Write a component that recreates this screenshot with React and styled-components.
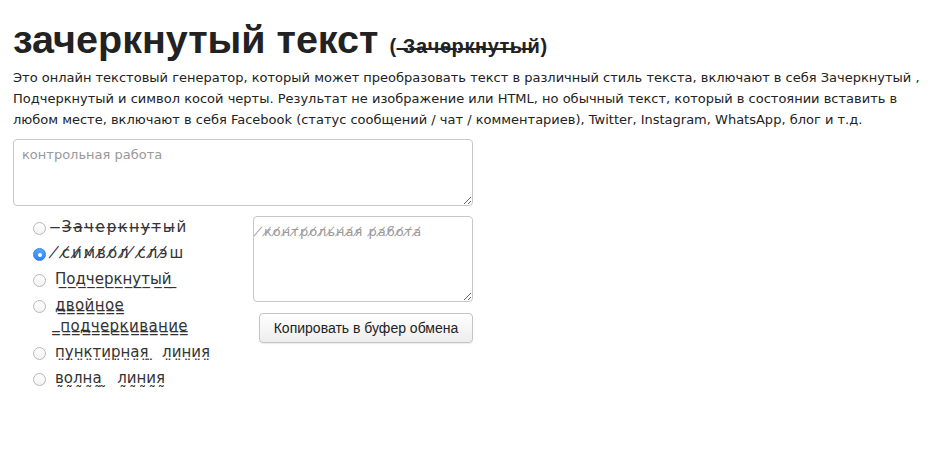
import React, { useState } from "react";
import styled, { createGlobalStyle } from "styled-components";

const Global = createGlobalStyle`
  html, body { margin: 0; padding: 0; background: #fff; }
  body { font-family: "DejaVu Sans", "Noto Sans", sans-serif; color: #222; }
`;

const NB = "\u00A0";
const markAfter = (s, m) => Array.from(s).map((c) => c + m).join("");
const markBefore = (s, m) => Array.from(s).map((c) => m + c).join("");

const Page = styled.div`
  padding: 12px 13px 0 13px;
`;

const Title = styled.h1`
  margin: 0;
  padding-top: 4px;
  height: 42px;
  font-family: "Liberation Sans", Arial, sans-serif;
  font-weight: bold;
  font-size: 39.5px;
  line-height: 46px;
  color: #222;
  white-space: nowrap;
`;

const Sub = styled.span`
  font-size: 20px;
  line-height: 20px;
  letter-spacing: 0.6px;
`;

const Intro = styled.p`
  margin: 9px 0 0 0;
  height: 63px;
  font-size: 13px;
  line-height: 21px;
  max-width: 910px;
  color: #222;
`;

const Widget = styled.div`
  width: 460px;
  margin-top: 9px;
`;

const Input = styled.textarea`
  display: block;
  box-sizing: border-box;
  width: 460px;
  height: 67px;
  border: 1px solid #c8c8c8;
  border-radius: 4px;
  padding: 7px 8px;
  font-family: "DejaVu Sans", sans-serif;
  font-size: 13px;
  color: #333;
  resize: vertical;
  outline: none;
  &::placeholder { color: #999; }
`;

const Columns = styled.div`
  display: flex;
  margin-top: 10px;
`;

const Options = styled.ul`
  list-style: none;
  margin: 0;
  padding: 1px 0 0 20px;
  width: 220px;
  box-sizing: border-box;
`;

const Option = styled.li`
  display: flex;
  align-items: flex-start;
  font-size: 15px;
  line-height: 21px;
  margin-bottom: 5px;
  color: #333;
`;

const Radio = styled.input`
  appearance: none;
  flex: none;
  width: 13px;
  height: 13px;
  margin: 5px 9px 0 0;
  border-radius: 50%;
  border: 1px solid #b8b8b8;
  background: linear-gradient(#fff, #f2f2f2);
  box-sizing: border-box;
  position: relative;
  &:checked {
    border-color: #2f7fe6;
    background: linear-gradient(#5aa7fa, #2a83f0);
  }
  &:checked::after {
    content: "";
    position: absolute;
    left: 3.5px;
    top: 3.5px;
    width: 4px;
    height: 4px;
    border-radius: 50%;
    background: #fff;
  }
`;

const Label = styled.label`
  white-space: normal;
  letter-spacing: ${(p) => p.$spacing || 0}px;
  word-spacing: ${(p) => p.$wordSpacing || 0}px;
`;

const Right = styled.div`
  width: 220px;
  margin-left: 20px;
  display: flex;
  flex-direction: column;
  align-items: flex-end;
`;

const Output = styled.textarea`
  display: block;
  box-sizing: border-box;
  width: 220px;
  height: 86px;
  border: 1px solid #c8c8c8;
  border-radius: 4px;
  padding: 7px 9px;
  font-family: "DejaVu Sans", sans-serif;
  font-size: 13px;
  letter-spacing: 1px;
  resize: vertical;
  outline: none;
  &::placeholder { color: #9a9a9a; }
`;

const CopyButton = styled.button`
  margin-top: 11px;
  width: 214px;
  height: 30px;
  border: 1px solid #c4c4c4;
  border-radius: 4px;
  background: linear-gradient(#ffffff, #ededed);
  font-family: "Liberation Sans", Arial, sans-serif;
  font-size: 14px;
  color: #222;
  box-shadow: 0 1px 1px rgba(0,0,0,0.08);
`;

const styles = [
  { id: "strike", text: NB + markBefore("Зачеркнутый", "\u0336"), spacing: 2 },
  { id: "slash", text: NB + markBefore("символ слэш", "\u0338"), spacing: 2 },
  { id: "under", text: markAfter("Подчеркнутый" + NB, "\u0332") },
  {
    id: "double",
    text: markAfter("двойное", "\u0333") + " " + NB + "\u0333" + markAfter("подчеркивание", "\u0333"),
    spacing: 0.4,
  },
  { id: "dots", text: markAfter("пунктирная" + NB, "\u0324") + " " + markAfter("линия", "\u0324"), wordSpacing: 2 },
  { id: "wave", text: markAfter("волна" + NB, "\u0330") + " " + markAfter("линия", "\u0330"), wordSpacing: 3 },
];

export default function App() {
  const [sel, setSel] = useState("slash");
  return (
    <Page>
      <Global />
      <Title>
        зачеркнутый текст <Sub>( {markBefore("Зачеркнутый", "\u0336")})</Sub>
      </Title>
      <Intro>
        Это онлайн текстовый генератор, который может преобразовать текст в различный стиль текста, включают в себя Зачеркнутый , Подчеркнутый и символ косой черты. Результат не изображение или HTML, но обычный текст, который в состоянии вставить в любом месте, включают в себя Facebook (статус сообщений / чат / комментариев), Twitter, Instagram, WhatsApp, блог и т.д.
      </Intro>
      <Widget>
        <Input placeholder="контрольная работа" />
        <Columns>
          <Options>
            {styles.map((s) => (
              <Option key={s.id}>
                <Radio
                  type="radio"
                  name="style"
                  id={s.id}
                  checked={sel === s.id}
                  onChange={() => setSel(s.id)}
                />
                <Label htmlFor={s.id} $spacing={s.spacing} $wordSpacing={s.wordSpacing}>
                  {s.text}
                </Label>
              </Option>
            ))}
          </Options>
          <Right>
            <Output placeholder={"\u0338" + markAfter("контрольная", "\u0338") + " " + markAfter("работа", "\u0338")} />
            <CopyButton>Копировать в буфер обмена</CopyButton>
          </Right>
        </Columns>
      </Widget>
    </Page>
  );
}
